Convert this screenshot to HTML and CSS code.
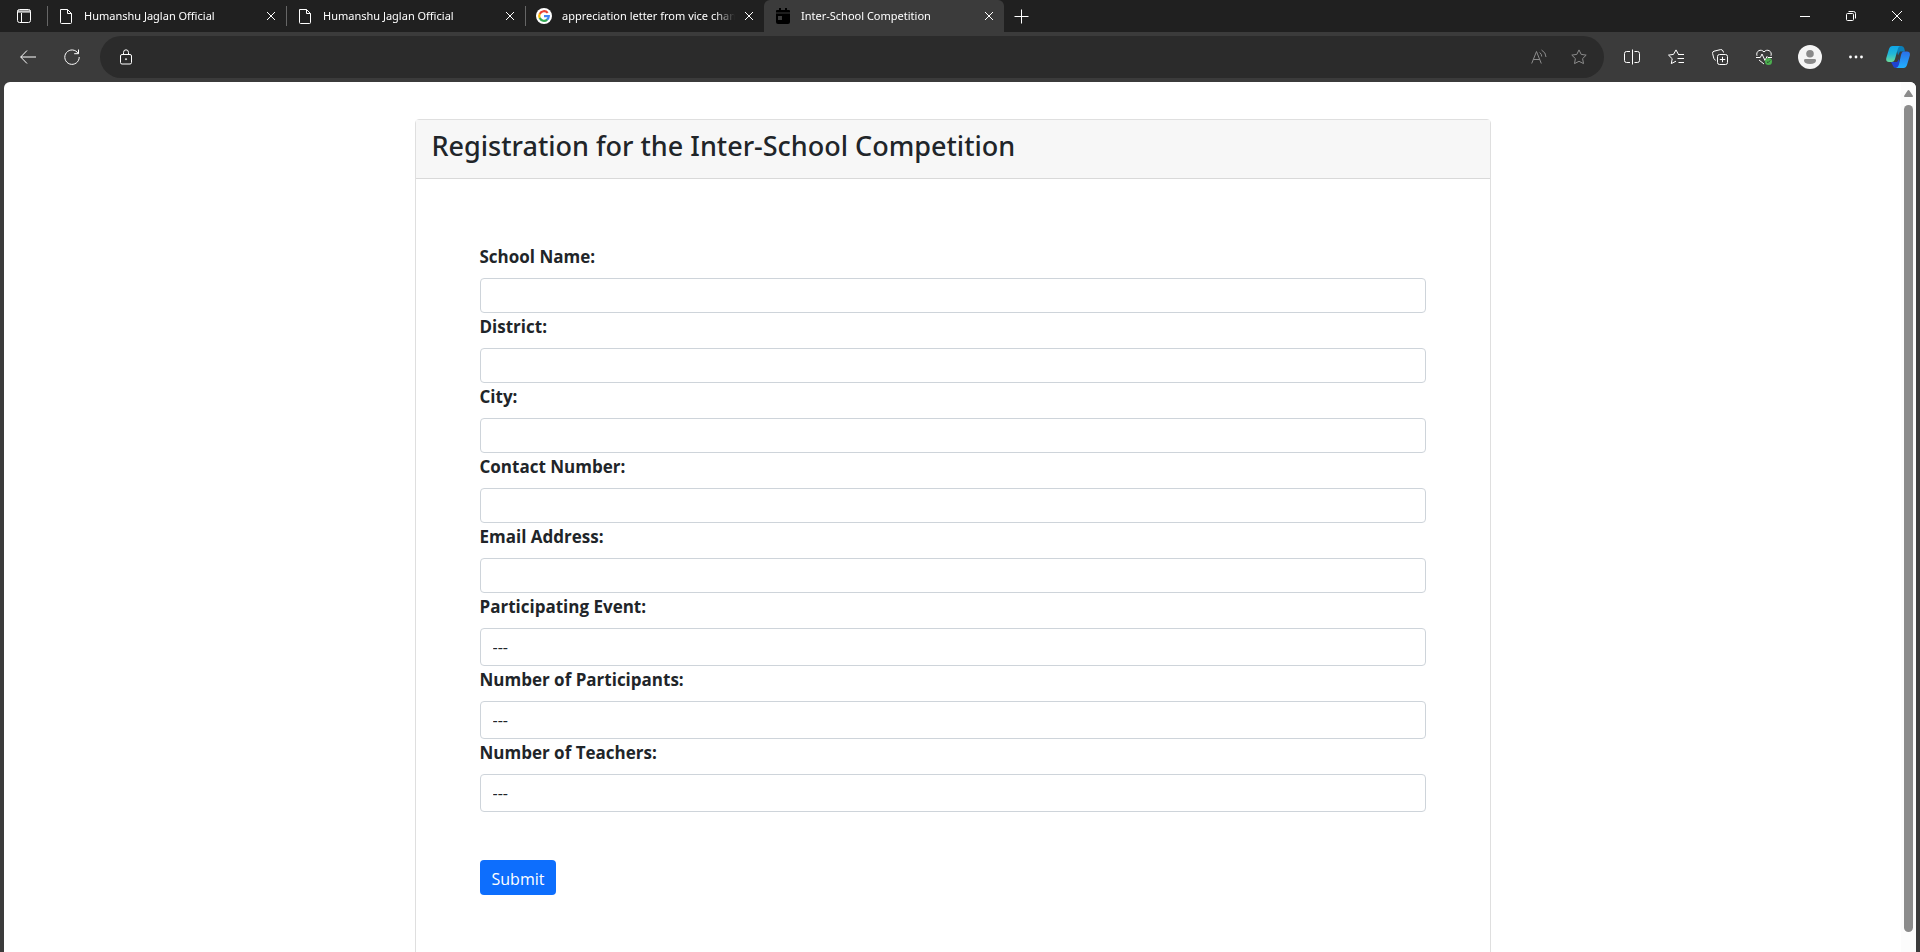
FILE: index.html
```html
<!DOCTYPE html>
<html lang="en">
<head>
<meta charset="utf-8">
<title>Inter-School Competition</title>
<link rel="stylesheet" href="styles.css">
</head>
<body>
<svg class="defs" aria-hidden="true">
  <symbol id="doc" viewBox="0 0 16 16"><path d="M2.500 1.500h7l4 4v9q0 1-1 1h-9q-1 0-1-1zM9.500 1.500v4h4"/></symbol>
  <symbol id="close" viewBox="0 0 10 10"><path d="M1 1l8 8M9 1L1 9"/></symbol>
</svg>
<div class="window">
  <header class="tabstrip">
    <button class="tab-actions" aria-label="Tab actions"><svg class="icon" viewBox="0 0 16 16"><rect x="1.500" y="1.500" width="13" height="13" rx="2"/><path d="M1.500 3h13M1.500 4h13M5.500 5v9"/></svg></button>
    <nav class="tabs" aria-label="Tabs">
      <div class="tab"><svg class="icon"><use href="#doc"/></svg><a class="tab-title" href="#">Humanshu Jaglan Official</a><button class="tab-close" aria-label="Close tab"><svg class="x"><use href="#close"/></svg></button></div>
      <div class="tab"><svg class="icon"><use href="#doc"/></svg><a class="tab-title" href="#">Humanshu Jaglan Official</a><button class="tab-close" aria-label="Close tab"><svg class="x"><use href="#close"/></svg></button></div>
      <div class="tab"><svg class="icon google" viewBox="0 0 16 16"><circle cx="8" cy="8" r="8" fill="#fff"/><g fill="none" stroke-width="2.200"><path stroke="#ea4335" d="M11.700 4.900A4.800 4.800 0 0 0 3.700 5.900"/><path stroke="#fbbc05" d="M3.800 5.700A4.800 4.800 0 0 0 3.800 10.300"/><path stroke="#34a853" d="M3.700 10.100A4.800 4.800 0 0 0 11.200 11.600"/><path stroke="#4285f4" d="M8 8.200h4.800A4.800 4.800 0 0 1 11 11.700"/></g></svg><a class="tab-title" href="#">appreciation letter from vice chan</a><button class="tab-close" aria-label="Close tab"><svg class="x"><use href="#close"/></svg></button></div>
      <div class="tab active"><svg class="icon calendar" viewBox="0 0 16 16"><path d="M1 5.500h14V14q0 2-2 2H3q-2 0-2-2z"/><path d="M1 4.500V3q0-1 1-1h2V0h2v2h4V0h2v2h2q1 0 1 1v1.500z"/><rect x="3" y="8" width="4" height="4" fill="#3b3b3b"/></svg><a class="tab-title" href="#">Inter-School Competition</a><button class="tab-close" aria-label="Close tab"><svg class="x"><use href="#close"/></svg></button></div>
    </nav>
    <button class="new-tab" aria-label="New tab"><svg class="icon" viewBox="0 0 16 16"><path d="M8.500 1.500v14M1.500 8.500h14"/></svg></button>
    <div class="window-controls">
      <button aria-label="Minimize"><svg class="x" viewBox="0 0 10 10"><path d="M0 5.500h10"/></svg></button>
      <button aria-label="Restore"><svg class="x" viewBox="0 0 10 10"><rect x=".5" y="2.500" width="7" height="7" rx="1"/><path d="M2.500.5h5q2 0 2 2v5"/></svg></button>
      <button aria-label="Close window"><svg class="x" viewBox="0 0 10 10"><path d="M0 0l10 10M10 0L0 10"/></svg></button>
    </div>
  </header>

  <div class="toolbar">
    <button aria-label="Back"><svg class="icon" viewBox="0 0 16 16"><path d="M7 1.500L.7 8 7 14.500M.7 8H16"/></svg></button>
    <button aria-label="Refresh"><svg class="icon" viewBox="0 0 16 16"><path d="M14.200 4.500A7.200 7.200 0 1 0 15.200 8M14.500.5v4.200h-4.300"/></svg></button>
    <div class="address">
      <svg class="icon lock" viewBox="0 0 16 16"><rect x="2.500" y="5.500" width="11" height="9.500" rx="1.500"/><path d="M5.500 5.500V3.500a2.500 2.700 0 0 1 5 0v2"/><circle cx="8" cy="10.200" r=".6"/></svg>
      <input class="url" type="text" aria-label="Address">
      <button class="dim" aria-label="Read aloud"><svg class="icon" viewBox="0 0 16 16"><path d="M.7 14.500L5.500 2.500l4.800 12M2.300 10.500h6.400M8.700 3.500q2 1.500 2 4M10.500 1q4.500 2.500 4.500 7"/></svg></button>
      <button class="dim" aria-label="Add to favorites"><svg class="icon" viewBox="0 0 16 16"><path d="M8 .9l2.200 4.500 5 .7-3.600 3.500.9 5L8 12.300l-4.500 2.300.9-5L.8 6.100l5-.7z"/></svg></button>
    </div>
    <button aria-label="Split screen"><svg class="icon" viewBox="0 0 16 16"><path d="M6 2.500H2.500q-2 0-2 2v7q0 2 2 2H6M10.500 2.500h3q2 0 2 2v7q0 2-2 2h-3M8.500.5v15"/></svg></button>
    <button aria-label="Favorites"><svg class="icon" viewBox="0 0 16 16"><path d="M12.500 5.500h-2L8 .9 5.500 5.400l-5 .7 3.700 3.600-.9 4.900L8 12.200M10 5.500h6M9.500 9.500h6.500M10.500 13.500H16"/></svg></button>
    <button aria-label="Collections"><svg class="icon" viewBox="0 0 16 16"><rect x="5.500" y="5.500" width="10" height="10" rx="2"/><path d="M10.500 7.800v5.400M7.800 10.500h5.400M3.700 11.300Q2.200 10.800 1.800 9.300L.6 4.500Q.2 2.700 2 2.200L8.500.6Q10.400.3 11 2l.5 1.500"/></svg></button>
    <button aria-label="Browser essentials"><svg class="icon" viewBox="0 0 16 16"><path d="M1 6.800C-.5 2 5-.8 8 3c3-3.800 8.500-1 7 3.800M0 8.500h4.300L6 5l3 6.500 2-4 1 1h4M3 11l5 4"/><circle cx="12.500" cy="12.500" r="3.500" fill="#4caf50" stroke="none"/><path stroke="#2a4a2b" d="M10.900 12.600l1.100 1.100 2.200-2.300"/></svg></button>
    <button class="profile" aria-label="Profile"><svg class="avatar" viewBox="0 0 24 24"><circle cx="12" cy="12" r="12" fill="#f5f5f5"/><circle cx="12" cy="8.800" r="3.800" fill="#8a8a8a"/><path fill="#8a8a8a" d="M7.500 14h9q1.500 0 1.500 1.200 0 3.800-6 3.800t-6-3.800Q6 14 7.500 14"/></svg></button>
    <button class="more" aria-label="Settings and more"><svg class="icon dots" viewBox="0 0 16 16"><circle cx="2.500" cy="8" r="1.400"/><circle cx="8" cy="8" r="1.400"/><circle cx="13.500" cy="8" r="1.400"/></svg></button>
    <button aria-label="Copilot"><svg class="avatar" viewBox="0 0 24 24"><defs>
      <linearGradient id="ca" x1="0" y1="0" x2="0" y2="1"><stop offset="0" stop-color="#0fa5e8"/><stop offset=".5" stop-color="#22b8d8"/><stop offset="1" stop-color="#6cdc9a"/></linearGradient>
      <linearGradient id="cb" x1="0" y1="0" x2="0" y2="1"><stop offset="0" stop-color="#2a6fe8"/><stop offset="1" stop-color="#22b0ff"/></linearGradient></defs>
      <path fill="#0b7fb8" d="M10 1h5.500q2.200 0 2.800 2.500L19 6.500h-5l-2 4z"/><path fill="#1f42d0" d="M5 17h6l2-3 1 9h-4q-2.500 0-3.200-2.500z"/><path fill="url(#ca)" d="M6.500 1H14q-1.500.6-2.200 3L9 14q-.8 3-3.500 3H3q-3.500 0-2.700-4L3 4q1-3 3.500-3z"/><path fill="url(#cb)" d="M17 6.500h4q3.500 0 2.800 4L21 20q-1 3-3.500 3H10q2-.6 2.800-3L15 10q.6-3 2-3.500z"/></svg></button>
  </div>

  <div class="viewport">
    <main class="page">
      <section class="card">
        <div class="card-header"><h3>Registration for the Inter-School Competition</h3></div>
        <form class="card-body">
          <label for="school">School Name:</label><input class="control" id="school" type="text">
          <label for="district">District:</label><input class="control" id="district" type="text">
          <label for="city">City:</label><input class="control" id="city" type="text">
          <label for="contact">Contact Number:</label><input class="control" id="contact" type="text">
          <label for="email">Email Address:</label><input class="control" id="email" type="email">
          <label for="event">Participating Event:</label><select class="control select" id="event"><option>---</option></select>
          <label for="participants">Number of Participants:</label><select class="control select" id="participants"><option>---</option></select>
          <label for="teachers">Number of Teachers:</label><select class="control select" id="teachers"><option>---</option></select>
          <button class="submit" type="submit">Submit</button>
        </form>
      </section>
    </main>
    <div class="scrollbar" aria-hidden="true"><svg class="arrow" viewBox="0 0 9 7"><path d="M4.500 0q.6 0 1 .7L9 6q0 1-.8 1H.8Q0 7 0 6L3.500.7q.4-.7 1-.7z"/></svg><div class="thumb"></div></div>
  </div>
</div>
</body>
</html>
```
FILE: styles.css
```css
* { box-sizing: border-box; }

body {
  margin: 0;
  background: #3b3b3b;
  color: #212529;
  font-family: "Open Sans", "Noto Sans", sans-serif;
  font-size: 16px;
}

button, input, select { font-family: inherit; }

.defs { position: absolute; width: 0; height: 0; }

.window {
  display: flex;
  flex-direction: column;
  height: 100vh;
  overflow: hidden;
}

.icon, .x { fill: none; stroke: currentColor; flex: none; display: block; }
.icon { width: 16px; height: 16px; }
.x { width: 10px; height: 10px; }

.tabstrip button, .toolbar button {
  display: flex;
  align-items: center;
  justify-content: center;
  padding: 0;
  border: 0;
  background: none;
  color: #fff;
}

/* Tab strip */
.tabstrip {
  display: flex;
  flex: none;
  height: 32px;
  background: #202020;
  color: #fff;
}

.tabstrip .tab-actions { width: 47px; }

.tabs { display: flex; }

.tab {
  display: flex;
  align-items: center;
  width: 239px;
  padding: 0 7px 0 11px;
  background: linear-gradient(#666, #666) left center / 1px 20px no-repeat;
}

.tab.active {
  width: 240px;
  background: #3b3b3b;
  border-radius: 6px 6px 0 0;
}

.tab-title {
  flex: 1;
  margin: 0 6px 0 10px;
  overflow: hidden;
  color: #fff;
  font-family: "Noto Sans", sans-serif;
  font-size: 11px;
  line-height: 20px;
  text-decoration: none;
  white-space: nowrap;
  mask-image: linear-gradient(to right, #000 calc(100% - 20px), transparent);
}

.google, .calendar { stroke: none; }
.calendar { fill: #000; }

.tabstrip .tab-close { width: 16px; height: 20px; }
.tabstrip .new-tab { width: 34px; }

.window-controls { display: flex; margin-left: auto; }
.window-controls button { width: 46px; }

/* Toolbar */
.toolbar {
  display: flex;
  flex: none;
  align-items: center;
  height: 50px;
  padding: 0 0 0 6px;
}

.toolbar button { flex: none; width: 44px; height: 36px; }

.address {
  display: flex;
  flex: 1;
  align-items: center;
  height: 42px;
  margin: 0 6px;
  padding: 0 5px 0 18px;
  border-radius: 21px;
  background: #2b2b2b;
  color: #fff;
}

.url {
  flex: 1;
  min-width: 0;
  margin: 0 12px;
  border: 0;
  outline: 0;
  background: none;
  color: #fff;
  font-size: 14px;
}

.toolbar .dim { width: 40px; color: #8c8c8c; }
.toolbar .profile { width: 48px; margin-right: 2px; }
.toolbar .more { width: 40px; }
.avatar { width: 24px; height: 24px; }
.dots { fill: #fff; stroke: none; }

/* Page area */
.viewport {
  display: flex;
  flex: 1;
  min-height: 0;
  margin: 0 4px;
  overflow: hidden;
  border-radius: 6px 6px 0 0;
  background: #fff;
}

.page { flex: 1; padding: 37px 16px 0; }

.card {
  max-width: 1076px;
  margin: 0 auto;
  border: 1px solid #dfdfdf;
  border-radius: 4px;
}

.card-header {
  padding: 9px 16px 15px;
  border-bottom: 1px solid #d9d9d9;
  background: #f7f7f7;
}

h3 {
  margin: 0;
  font-family: "Noto Sans", sans-serif;
  font-size: 27px;
  font-weight: 500;
  line-height: 34px;
}

.card-body {
  display: flex;
  flex-direction: column;
  align-items: stretch;
  padding: 64px;
}

label {
  margin-bottom: 8px;
  font-size: 17px;
  font-weight: 700;
  line-height: 27px;
}

.control {
  width: 100%;
  height: 35px;
  padding: 0 12px;
  border: 1px solid #ced4da;
  border-radius: 4px;
  background: #fff;
  color: #212529;
  font-size: 16px;
}

.select { height: 38px; appearance: none; }

.submit {
  align-self: flex-start;
  height: 35px;
  margin-top: 48px;
  padding: 3px 12px 0;
  border: 0;
  border-radius: 4px;
  background: #0d6efd;
  color: #fff;
  font-size: 16px;
}

.scrollbar {
  display: flex;
  flex-direction: column;
  flex: none;
  align-items: center;
  width: 15px;
  padding: 8px 0 20px;
  background: #fcfcfc;
}

.arrow { width: 9px; height: 7px; fill: #8b8b8b; }

.thumb {
  flex: 1;
  width: 9px;
  margin-top: 8px;
  border-radius: 5px;
  background: #8b8b8b;
}
```
